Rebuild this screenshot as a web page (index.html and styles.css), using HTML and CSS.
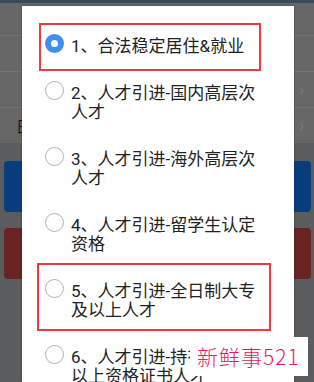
FILE: index.html
```html
<!DOCTYPE html>
<html lang="zh-CN">
<head>
<meta charset="utf-8">
<title>人才引进</title>
<link rel="stylesheet" href="styles.css">
</head>
<body>
<div class="page">
  <div class="topbar"></div>
  <div class="form">
    <div class="row"></div>
    <div class="row"></div>
    <div class="row"><span class="chev">›</span></div>
    <div class="row last"><span class="label">日期</span><span class="chev">›</span></div>
  </div>
  <div class="actions">
    <div class="btn blue"></div>
    <div class="btn red"></div>
  </div>
</div>

<div class="dialog">
  <ul class="options">
    <li class="option"><span class="radio checked"></span><span class="text">1、合法稳定居住&amp;就业</span></li>
    <li class="option"><span class="radio"></span><span class="text">2、人才引进-国内高层次人才</span></li>
    <li class="option"><span class="radio"></span><span class="text">3、人才引进-海外高层次人才</span></li>
    <li class="option"><span class="radio"></span><span class="text">4、人才引进-留学生认定资格</span></li>
    <li class="option"><span class="radio"></span><span class="text">5、人才引进-全日制大专及以上人才</span></li>
    <li class="option"><span class="radio"></span><span class="text">6、人才引进-持有中级及以上资格证书人才</span></li>
  </ul>
</div>

<div class="mark mark-one"></div>
<div class="mark mark-two"></div>

<div class="watermark">新鲜事521</div>
</body>
</html>
```

FILE: styles.css
```css
html, body {
  margin: 0;
  padding: 0;
}

body {
  width: 314px;
  height: 382px;
  overflow: hidden;
  position: relative;
  background: #5b5c5e;
  font-family: "Roboto", "Noto Sans CJK SC", sans-serif;
}

.page {
  display: flex;
  flex-direction: column;
}

.topbar {
  height: 3px;
  background: #3a4a5d;
}

.form {
  display: flex;
  flex-direction: column;
  background: #676767;
}

.row {
  height: 35px;
  border-bottom: 1px solid #747474;
  display: flex;
  align-items: center;
  justify-content: space-between;
  padding: 0 10px 0 16px;
}

.row:first-child {
  height: 32px;
}

.row.last {
  border-bottom: none;
}

.label {
  font-size: 15px;
  color: #111;
}

.chev {
  margin-left: auto;
  color: #7c7c7c;
  font-size: 16px;
  line-height: 1;
}

.actions {
  display: flex;
  flex-direction: column;
  gap: 16px;
  padding: 18px 3px 0 4px;
}

.btn {
  height: 51px;
  border-radius: 4px;
}

.btn.blue {
  background: #0a3d7e;
}

.btn.red {
  background: #6a2323;
}

.dialog {
  position: absolute;
  left: 22px;
  top: 6px;
  width: 272px;
  height: 376px;
  overflow: hidden;
  background: #fff;
  box-shadow: 0 0 2px rgba(0, 0, 0, 0.35);
}

.options {
  list-style: none;
  margin: 0;
  padding: 17px 26px 0 23px;
}

.option {
  display: flex;
  align-items: flex-start;
  gap: 7px;
  padding: 14px 0;
}

.radio {
  flex: none;
  width: 19px;
  height: 19px;
  margin-top: -3px;
  box-sizing: border-box;
  border-radius: 50%;
  border: 1px solid #b3b3b3;
  background: #fff;
}

.radio.checked {
  border: 6px solid #3f8fee;
}

.text {
  font-size: 17px;
  line-height: 19px;
  color: #222;
}

.mark {
  position: absolute;
  border: 2px solid #f03a3d;
  box-sizing: border-box;
}

.mark-one {
  left: 39px;
  top: 23px;
  width: 222px;
  height: 48px;
}

.mark-two {
  left: 37px;
  top: 263px;
  width: 234px;
  height: 68px;
}

.watermark {
  position: absolute;
  left: 190px;
  top: 337px;
  width: 118px;
  height: 39px;
  box-sizing: border-box;
  padding-left: 7px;
  background: #fff;
  color: #e8195e;
  font-family: "Noto Sans CJK SC", sans-serif;
  font-weight: 300;
  font-size: 21px;
  line-height: 39px;
  letter-spacing: 1px;
  white-space: nowrap;
}
```
